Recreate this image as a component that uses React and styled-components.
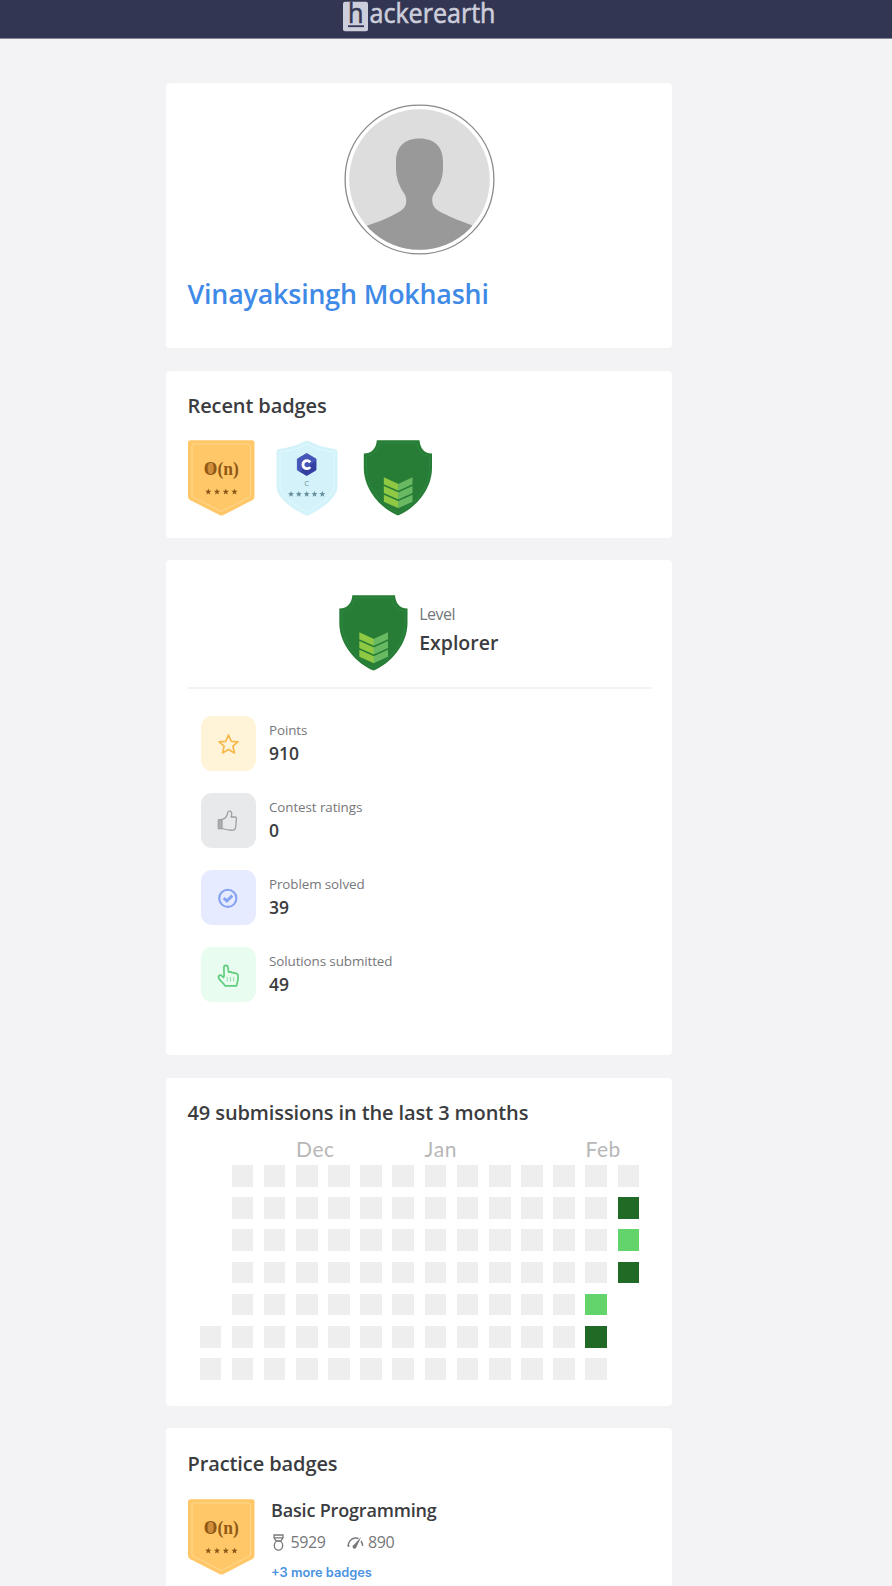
import React from "react";
import styled, { createGlobalStyle } from "styled-components";

const GlobalStyle = createGlobalStyle`
  * { box-sizing: border-box; }
  html, body { margin: 0; background: #f3f3f5; }
  body { height: 1586px; overflow: hidden; font-family: "Open Sans", "Noto Sans", sans-serif; color: #3b3c40; }
  svg { display: block; flex: none; }
`;

const Page = styled.div`
  height: 1586px;
  overflow: hidden;
`;

const TopBar = styled.header`
  height: 39px;
  display: flex;
  justify-content: center;
  padding-right: 52px;
  background: #333652;
  border-bottom: 1px solid #85869a;
`;

const Column = styled.main`
  width: 506.5px;
  margin: 44px 0 0 165.5px;
  display: flex;
  flex-direction: column;
  gap: 22.5px;
`;

const Card = styled.section`
  height: ${(p) => p.$height}px;
  flex: none;
  padding: 21.5px 21.5px 0 22px;
  background: #fff;
  border-radius: 4px;
`;

const Text = styled.span`
  display: block;
  white-space: nowrap;
  font-size: ${(p) => p.$size}px;
  line-height: ${(p) => p.$line}px;
  font-weight: ${(p) => p.$weight || 400};
  letter-spacing: ${(p) => p.$spacing || 0}px;
  color: ${(p) => p.$color || "#3b3c40"};
  font-family: ${(p) => p.$family || "inherit"};
`;

const Heading = styled.h2`
  margin: 0;
  width: max-content;
  font-size: 20px;
  line-height: 28px;
  font-weight: 600;
  letter-spacing: -0.1px;
  white-space: nowrap;
`;

const AvatarWrap = styled.div`
  display: flex;
  justify-content: center;
  margin: -1px 0 20px 0;
`;

const BadgeRow = styled.div`
  display: flex;
  align-items: flex-start;
  gap: 21px;
  margin-top: 20px;
`;

const LevelRow = styled.div`
  display: flex;
  justify-content: center;
  gap: 11px;
  height: 107.5px;
  padding: 13px 0.5px 0 0;
  border-bottom: 2px solid #f2f2f3;
`;

const LevelText = styled.div`
  padding-top: 7.5px;
`;

const Stats = styled.div`
  display: flex;
  flex-direction: column;
  gap: 22px;
  padding: 27.2px 0 0 13px;
`;

const Stat = styled.div`
  display: flex;
  gap: 13.5px;
  height: 55px;
`;

const StatIcon = styled.div`
  width: 55px;
  height: 55px;
  display: flex;
  align-items: center;
  justify-content: center;
  border-radius: 11px;
  background: ${(p) => p.$bg};
`;

const StatText = styled.div`
  padding-top: 3.8px;
`;

const Months = styled.div`
  display: grid;
  grid-template-columns: repeat(14, 32.17px);
  height: 30px;
  margin: 6.5px 0 1.5px 12px;
`;

const Month = styled(Text)`
  grid-column: ${(p) => p.$col};
  grid-row: 1;
  width: max-content;
`;

const Grid = styled.div`
  display: grid;
  grid-auto-flow: column;
  grid-template-rows: repeat(7, 21.6px);
  grid-template-columns: repeat(14, 21.6px);
  gap: 10.6px 10.57px;
  margin-left: 12px;
`;

const CELL = { e: "#eeeeee", l: "#63d36b", d: "#216a26", x: "transparent" };

const Cell = styled.i`
  background: ${(p) => CELL[p.$kind]};
`;

const PracticeRow = styled.div`
  display: flex;
  gap: 16.5px;
  margin-top: 21.5px;
`;

const PracticeText = styled.div`
  margin-top: -1.5px;
`;

const ScoreRow = styled.div`
  display: flex;
  align-items: center;
  gap: 21px;
  height: 24px;
  margin: 8.5px 0 8.5px 2px;
`;

const Score = styled.div`
  display: flex;
  align-items: center;
  gap: ${(p) => p.$gap}px;
`;

const star = (cx, cy, r) => {
  const pts = [];
  for (let i = 0; i < 10; i++) {
    const a = (Math.PI / 5) * i - Math.PI / 2;
    const k = i % 2 ? r * 0.42 : r;
    pts.push(`${(cx + k * Math.cos(a)).toFixed(2)},${(cy + k * Math.sin(a)).toFixed(2)}`);
  }
  return pts.join(" ");
};

const Logo = () => (
  <svg width="156" height="38" viewBox="0 0 156 38">
    <rect x="1" y="1.7" width="25" height="29.5" rx="2" fill="#cdcedb" />
    <text x="6" y="23.3" fontFamily="Open Sans" fontSize="28" fill="#333652" stroke="#333652" strokeWidth="0.6" textLength="15.5" lengthAdjust="spacingAndGlyphs">h</text>
    <rect x="6" y="25.3" width="16" height="1.8" fill="#333652" />
    <text x="27.5" y="23.3" fontFamily="Open Sans" fontSize="27" fill="#cdcedb" stroke="#cdcedb" strokeWidth="0.6" textLength="126" lengthAdjust="spacingAndGlyphs">ackerearth</text>
  </svg>
);

const Avatar = () => (
  <svg width="151" height="151" viewBox="0 0 151 151">
    <clipPath id="face"><circle cx="75.5" cy="75.5" r="70.3" /></clipPath>
    <circle cx="75.5" cy="75.5" r="74.4" fill="#fff" stroke="#8a8a8a" strokeWidth="1.3" />
    <g clipPath="url(#face)">
      <rect width="151" height="151" fill="#dddddd" />
      <path fill="#999" d="M75.5 34.500C91 34.500 99 43 99 58v6c0 11-4 18-8 24c-3 4-3 7-2.500 11c1 5 5 7.500 11 10.500c9 4.500 18 8 29 12V151H22V122c12-4 21-7.500 29-12c6-3 10-5.500 11-10.500c.7-4 .2-7-2.500-11C55.500 82 52 75 52 64V58C52 43 60 34.500 75.500 34.500z" />
    </g>
  </svg>
);

const OrangeBadge = () => (
  <svg width="67" height="76" viewBox="0 0 67 76">
    <path fill="#ffc768" d="M2.500 .3H64Q66.500 .3 66.500 2.800V56.500Q66.500 59 64 60.300L35.500 75Q33.500 76 31.500 75L2.500 60.300Q0 59 0 56.500V2.800Q0 .3 2.500 .3z" />
    <path fill="none" stroke="#ffdc97" strokeWidth=".8" d="M6.500 4H60Q62.500 4 62.500 6.500V56.500L33.300 71.500L4 56.500V6.500Q4 4 6.500 4z" />
    <ellipse cx="22.3" cy="28.8" rx="4.8" ry="5.8" fill="#cf8e3b" />
    <text x="15.8" y="34.8" fontFamily="Liberation Serif" fontWeight="700" fontSize="18" fill="#915814" textLength="35" lengthAdjust="spacingAndGlyphs">O(n)</text>
    {[20.3, 29, 37.8, 46.5].map((x) => <polygon key={x} points={star(x, 51.8, 3.3)} fill="#8a5516" />)}
  </svg>
);

const BlueBadge = () => (
  <svg width="62" height="76" viewBox="0 0 62 76">
    <path fill="#d3f2fa" d="M28 1.500Q31 .2 34 1.500C42 6 51 8 59 9Q61.500 9.500 61.500 12V47C61.500 57 46 69 33 75Q31 76 29 75C16 69 .5 57 .5 47V12Q.5 9.500 3 9C11 8 20 6 28 1.500z" />
    <path fill="none" stroke="#e6fbff" strokeWidth=".8" d="M31 4C39 9 49 11 58 12V46C58 55 43 66 31 72C19 66 4 55 4 46V12C13 11 23 9 31 4z" />
    <path fill="#4556b8" d="M30.700 13.500L40 19V30L30.700 35.500L21.400 30V19z" stroke="#4556b8" strokeWidth="1" strokeLinejoin="round" />
    <path fill="#3440a0" d="M40 21V30L30.700 35.500L23.700 31.500z" />
    <path d="M34.200 22.300A4 4 0 1 0 34.200 27" fill="none" stroke="#fff" strokeWidth="2.900" />
    <text x="30.7" y="45.8" textAnchor="middle" fontFamily="Open Sans" fontSize="7.5" fill="#6d8f98">C</text>
    {[15, 22.8, 30.7, 38.5, 46.3].map((x) => <polygon key={x} points={star(x, 54.2, 3.2)} fill="#668f9c" />)}
  </svg>
);

const GreenShield = ({ width = 69 }) => (
  <svg width={width} height="76" viewBox="0 0 69 76">
    <path fill="#277d35" d="M13.300 .2H56C56.500 7 60 13.500 68.500 13.500V28C68.500 50 51 69 34.500 75.500C18 69 .3 50 .3 28V13.500C9 13.500 13 7 13.300 .2z" />
    <path fill="none" stroke="#2d8d49" strokeWidth=".7" d="M16 3H53C54 10 59 15.500 66 16V28C66 48 50 66 34.500 72.700C19 66 3 48 3 28V16C10 15.500 15 10 16 3z" />
    {[37.3, 46, 54.7].map((y) => (
      <g key={y}>
        <path fill="#8fc943" d={`M20.3 ${y}L35 ${y + 6.6}V${y + 13.5}L20.3 ${y + 7}z`} />
        <path fill="#69b962" d={`M49 ${y}L34.7 ${y + 6.6}V${y + 13.5}L49 ${y + 7}z`} />
      </g>
    ))}
  </svg>
);

const StarIcon = () => (
  <svg width="22" height="22" viewBox="0 0 22 22" fill="none" stroke="#f7b94b" strokeWidth="1.700" strokeLinejoin="round">
    <path d="M11.500 2L14.300 8.300L20.900 8.900L15.900 13.200L17.500 19.900L11.500 16.400L5.500 19.900L7.100 13.200L2.100 8.900L8.700 8.300z" />
  </svg>
);

const ThumbIcon = () => (
  <svg width="22" height="22" viewBox="0 0 22 22" fill="none" stroke="#9fa0a3" strokeWidth="1.300" strokeLinejoin="round">
    <path d="M1.300 10L5 9.500V18.700L1.300 18.500z" fill="#adaeb1" />
    <path d="M5 9.700C8.500 8.500 10 6.500 10.700 3C11 1.300 12 .8 13.200 1.200C15.300 2 15 5 14 7L18.200 7C19.500 7.200 19.600 8.500 19.400 9.500L18.700 17C18.500 19 17.500 20 16 20.200C12.500 20.500 9 19.800 5 18.500" />
  </svg>
);

const CheckIcon = () => (
  <svg width="22" height="22" viewBox="0 0 22 22" fill="none" stroke="#86a3f0">
    <circle cx="10.800" cy="11.300" r="8.600" strokeWidth="2.100" />
    <path d="M6.700 11L9.800 14L15.300 8.700" strokeWidth="3" />
  </svg>
);

const PointerIcon = () => (
  <svg width="24" height="24" viewBox="0 0 24 24" fill="none" stroke="#5fcd7e" strokeWidth="1.700" strokeLinejoin="round">
    <path transform="translate(.3 .8)" d="M7.800 13L7.600 3.800C7.600 .7 11.500 .7 11.700 3.800L12.300 8.300C14 7.700 15 8 15.700 9C17 8.500 18 8.800 18.800 9.700C20.700 9.500 21.700 10.300 21.700 12V15.500C21.700 18 20.300 19 20.300 22H8.700C7.500 19 2.800 16.500 2.200 13.700C1.700 11.500 4.300 10.800 5.600 12L7.800 14.200" />
    <path d="M11.300 14V18.500M14.500 14V18.500M17.700 14V18.500" strokeWidth="1" opacity=".65" />
  </svg>
);

const MedalIcon = () => (
  <svg width="11" height="17" viewBox="0 0 11 17" fill="none" stroke="#77787b" strokeWidth="1.300">
    <path d="M1 1H10V3.800L8 6.800H3L1 3.800zM1 3.800H10" />
    <ellipse cx="5.500" cy="11.500" rx="4.200" ry="4.700" />
  </svg>
);

const GaugeIcon = () => (
  <svg width="17" height="13" viewBox="0 0 17 13" fill="none" stroke="#77787b" strokeWidth="1.400">
    <path d="M1 10C1.300 6 4.200 2.300 8 2C9.300 1.800 10.300 2 11.500 2.500M14 5C15.200 6.500 15.500 7.800 15.700 10M.5 10H2.500" />
    <path d="M14.200 .8L7 8.800A2 2 0 1 0 9.500 11z" fill="#77787b" stroke="none" />
  </svg>
);

const STATS = [
  ["Points", "910", "#fff4d8", StarIcon],
  ["Contest ratings", "0", "#e8e9eb", ThumbIcon],
  ["Problem solved", "39", "#e6ebff", CheckIcon],
  ["Solutions submitted", "49", "#e9fcf0", PointerIcon],
];

const WEEKS = ["xxxxxee", ...Array(11).fill("eeeeeee"), "eeeelde", "edldxxx"];

export default function App() {
  return (
    <Page>
      <GlobalStyle />
      <TopBar><Logo /></TopBar>
      <Column>
        <Card $height={265}>
          <AvatarWrap><Avatar /></AvatarWrap>
          <Text $size={26.8} $line={38} $weight={600} $spacing={-0.17} $color="#3f8ae6">Vinayaksingh Mokhashi</Text>
        </Card>
        <Card $height={167}>
          <Heading>Recent badges</Heading>
          <BadgeRow><OrangeBadge /><BlueBadge /><GreenShield width={78} /></BadgeRow>
        </Card>
        <Card $height={495}>
          <LevelRow>
            <GreenShield />
            <LevelText>
              <Text $size={16} $line={24} $spacing={-0.5} $color="#76777a">Level</Text>
              <Text $size={19.5} $line={34} $weight={600}>Explorer</Text>
            </LevelText>
          </LevelRow>
          <Stats>
            {STATS.map(([label, value, bg, Icon]) => (
              <Stat key={label}>
                <StatIcon $bg={bg}><Icon /></StatIcon>
                <StatText>
                  <Text $size={13.4} $line={20} $spacing={-0.09} $color="#76777a">{label}</Text>
                  <Text $size={17.5} $line={26} $weight={600}>{value}</Text>
                </StatText>
              </Stat>
            ))}
          </Stats>
        </Card>
        <Card $height={328}>
          <Heading>49 submissions in the last 3 months</Heading>
          <Months>
            {[["Dec", 4], ["Jan", 8], ["Feb", 13]].map(([m, col]) => (
              <Month key={m} $col={col} $size={21} $line={30} $spacing={0.6} $color="#b7b7b7" $family="Lato, sans-serif">{m}</Month>
            ))}
          </Months>
          <Grid>
            {WEEKS.flatMap((week, w) => [...week].map((kind, d) => <Cell key={`${w}-${d}`} $kind={kind} />))}
          </Grid>
        </Card>
        <Card $height={200}>
          <Heading>Practice badges</Heading>
          <PracticeRow>
            <OrangeBadge />
            <PracticeText>
              <Text $size={18} $line={24} $weight={600} $spacing={-0.17}>Basic Programming</Text>
              <ScoreRow>
                <Score $gap={6.5}>
                  <MedalIcon />
                  <Text $size={16} $line={24} $spacing={-0.4} $color="#76777a">5929</Text>
                </Score>
                <Score $gap={4.5}>
                  <GaugeIcon />
                  <Text $size={16} $line={24} $spacing={-0.4} $color="#76777a">890</Text>
                </Score>
              </ScoreRow>
              <Text $size={12.8} $line={20} $weight={600} $color="#4a93e2" $family="Inter, sans-serif">+3 more badges</Text>
            </PracticeText>
          </PracticeRow>
        </Card>
      </Column>
    </Page>
  );
}
